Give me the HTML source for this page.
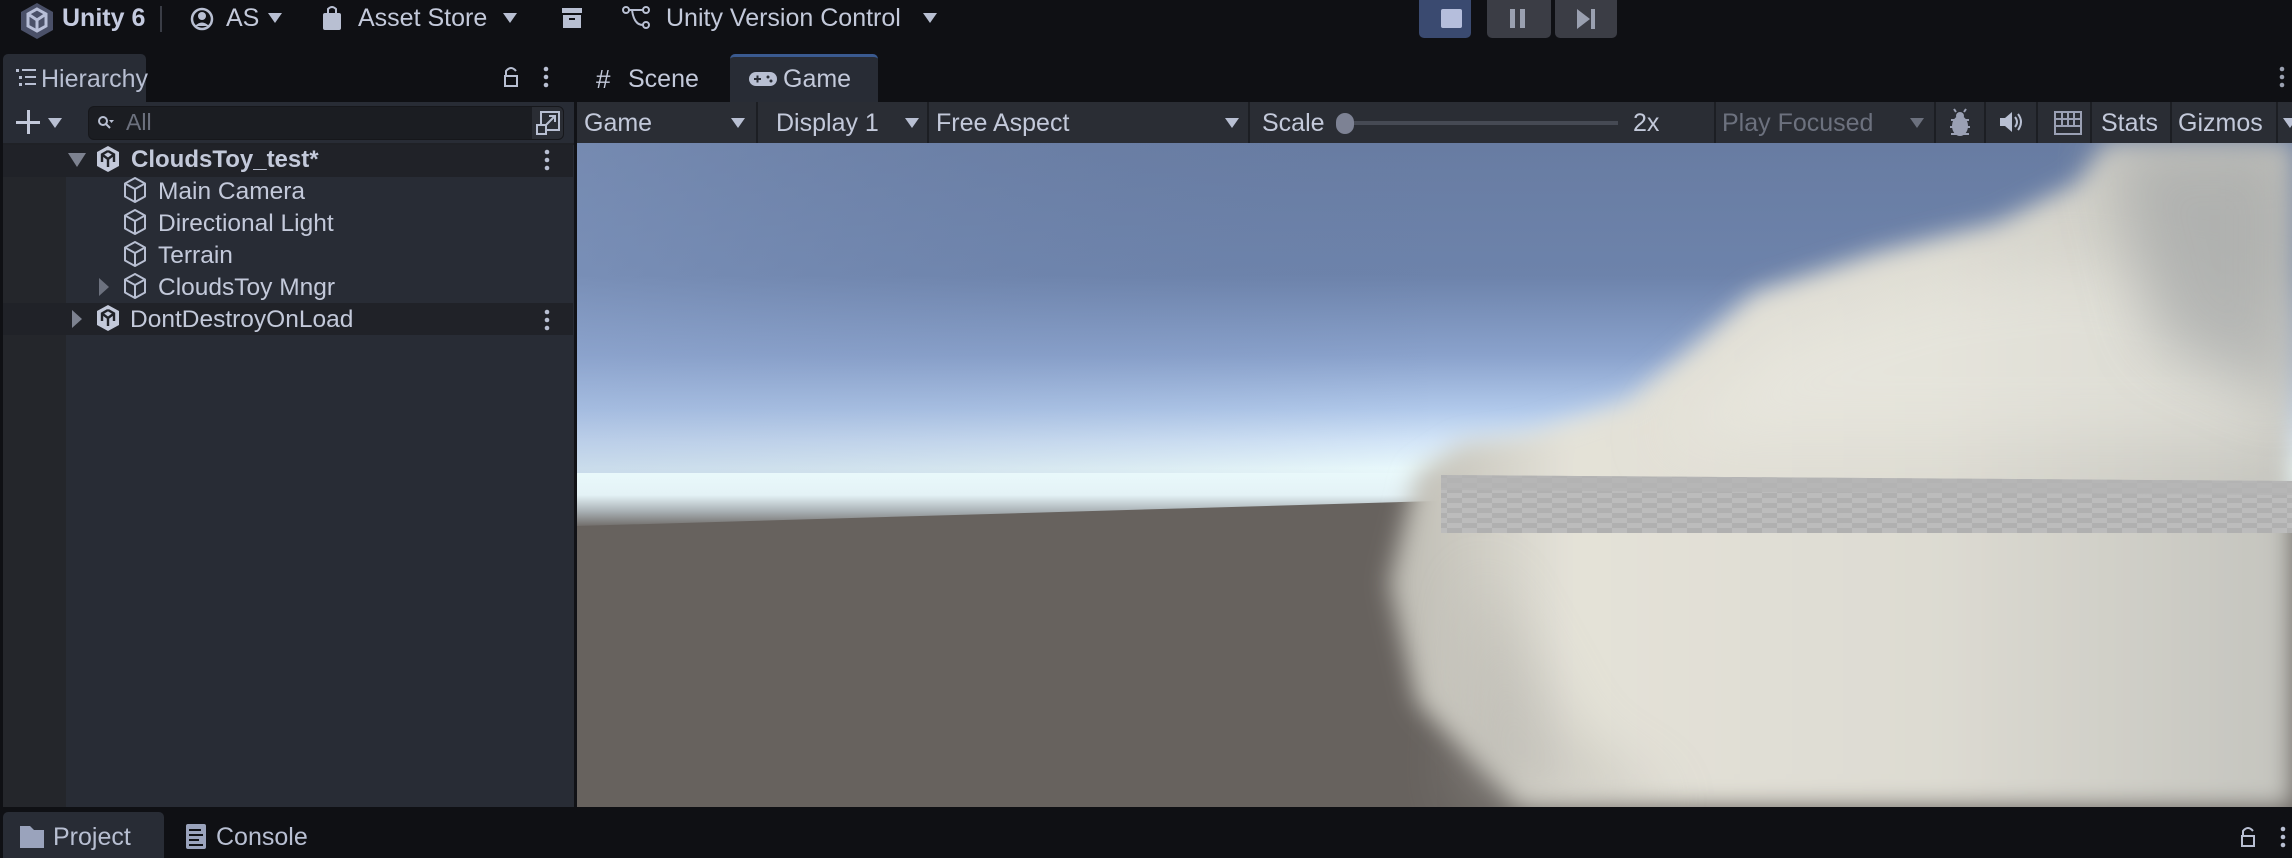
<!DOCTYPE html>
<html><head><meta charset="utf-8"><style>
*{margin:0;padding:0;box-sizing:border-box}
body{width:2292px;height:858px;overflow:hidden;background:#0f1014;font-family:"Liberation Sans",sans-serif;color:#c3c9da;position:relative}
.a{position:absolute;white-space:nowrap}
.t{font-size:25px;line-height:1}
.tri{position:absolute;width:0;height:0;border-left:7px solid transparent;border-right:7px solid transparent;border-top:10px solid #b8bfd2}
.sep{position:absolute;width:2px;background:#1c1e23}
.row{position:absolute;left:3px;width:570px;height:32px}
</style></head><body>

<!-- top bar -->
<svg class="a" style="left:20px;top:2px" width="34" height="38" viewBox="0 0 34 38"><polygon points="17,1 33,10 33,28 17,37 1,28 1,10" fill="#4a5068"/><path d="M17 7 L26 12 L26 24 L17 29 L8 24 L8 12Z" fill="none" stroke="#b8bfd8" stroke-width="3"/><path d="M17 18 V29 M17 18 L8 12 M17 18 L26 12" stroke="#b8bfd8" stroke-width="3"/></svg>
<div class="a t" style="left:62px;top:6px;font-weight:bold;color:#c4cadf">Unity 6</div>
<div class="sep" style="left:160px;top:6px;height:26px;background:#3a3d46"></div>
<svg class="a" style="left:190px;top:6px" width="24" height="26" viewBox="0 0 24 26"><circle cx="12" cy="13" r="10" fill="none" stroke="#b8bfd2" stroke-width="2.5"/><circle cx="12" cy="10" r="4" fill="#b8bfd2"/><path d="M5 20 Q12 13 19 20" fill="#b8bfd2"/></svg>
<div class="a t" style="left:226px;top:6px">AS</div><div class="tri" style="left:268px;top:13px"></div>
<svg class="a" style="left:322px;top:5px" width="20" height="26" viewBox="0 0 20 26"><path d="M6 8 V4 Q10 0 14 4 V8" fill="none" stroke="#b8bfd2" stroke-width="2"/><rect x="1" y="8" width="18" height="17" rx="2" fill="#b8bfd2"/></svg>
<div class="a t" style="left:358px;top:6px">Asset Store</div><div class="tri" style="left:503px;top:13px"></div>
<svg class="a" style="left:561px;top:7px" width="22" height="22" viewBox="0 0 22 22"><rect x="1" y="1" width="20" height="5" fill="#b8bfd2"/><rect x="2" y="8" width="18" height="13" fill="#b8bfd2"/><rect x="8" y="11" width="6" height="2" fill="#0f1014"/></svg>
<svg class="a" style="left:622px;top:5px" width="30" height="26" viewBox="0 0 30 26"><circle cx="4" cy="5" r="3" fill="none" stroke="#b8bfd2" stroke-width="2"/><circle cx="24" cy="5" r="3" fill="none" stroke="#b8bfd2" stroke-width="2"/><circle cx="24" cy="20" r="3" fill="none" stroke="#b8bfd2" stroke-width="2"/><path d="M7 5 H21 M10 5 Q12 20 21 20" fill="none" stroke="#b8bfd2" stroke-width="2"/></svg>
<div class="a t" style="left:666px;top:6px">Unity Version Control</div><div class="tri" style="left:923px;top:13px"></div>

<div class="a" style="left:1419px;top:0;width:52px;height:38px;background:#3a4a70;border-radius:0 0 5px 5px"></div>
<div class="a" style="left:1441px;top:9px;width:21px;height:19px;background:#b5bedc;border-radius:2px"></div>
<div class="a" style="left:1487px;top:0;width:64px;height:38px;background:#3b3d45;border-radius:0 0 5px 5px"></div>
<div class="a" style="left:1510px;top:9px;width:5px;height:19px;background:#9aa0b0"></div><div class="a" style="left:1520px;top:9px;width:5px;height:19px;background:#9aa0b0"></div>
<div class="a" style="left:1555px;top:0;width:62px;height:38px;background:#3b3d45;border-radius:0 0 5px 5px"></div>
<svg class="a" style="left:1577px;top:9px" width="20" height="20"><polygon points="0,0 13,10 0,20" fill="#9aa0b0"/><rect x="14" y="0" width="4" height="20" fill="#9aa0b0"/></svg>

<!-- tab row -->
<div class="a" style="left:3px;top:54px;width:143px;height:48px;background:#282c35;border-radius:5px 5px 0 0"></div>
<svg class="a" style="left:16px;top:69px" width="20" height="18"><g fill="#b8bfd2"><rect x="0" y="0" width="3" height="3"/><rect x="6" y="0" width="14" height="2"/><rect x="3" y="7" width="3" height="3"/><rect x="9" y="7" width="11" height="2"/><rect x="3" y="14" width="3" height="3"/><rect x="9" y="14" width="11" height="2"/></g></svg>
<div class="a t" style="left:41px;top:67px;color:#b8bfd2">Hierarchy</div>
<svg class="a" style="left:503px;top:66px" width="16" height="22"><path d="M3 9 V5 Q8 -1 13 5" fill="none" stroke="#b8bfd2" stroke-width="2"/><rect x="2" y="10" width="12" height="10" fill="none" stroke="#b8bfd2" stroke-width="2"/></svg>
<svg class="a" style="left:543px;top:66px" width="6" height="22"><circle cx="3" cy="3" r="2.3" fill="#b8bfd2"/><circle cx="3" cy="11" r="2.3" fill="#b8bfd2"/><circle cx="3" cy="19" r="2.3" fill="#b8bfd2"/></svg>
<div class="a t" style="left:596px;top:66px;font-size:26px">#</div>
<div class="a t" style="left:628px;top:67px">Scene</div>
<div class="a" style="left:730px;top:54px;width:148px;height:48px;background:#282c35;border-top:3px solid #3a5a90;border-radius:5px 5px 0 0"></div>
<svg class="a" style="left:749px;top:70px" width="28" height="18"><rect x="0" y="2" width="28" height="14" rx="7" fill="#b8bfd2"/><rect x="5" y="8" width="7" height="2" fill="#282c35"/><rect x="7.5" y="5.5" width="2" height="7" fill="#282c35"/><circle cx="19" cy="7" r="1.5" fill="#282c35"/><circle cx="22" cy="11" r="1.5" fill="#282c35"/></svg>
<div class="a t" style="left:783px;top:67px">Game</div>
<svg class="a" style="left:2279px;top:66px" width="6" height="22"><circle cx="3" cy="3" r="2.3" fill="#9aa0b0"/><circle cx="3" cy="11" r="2.3" fill="#9aa0b0"/><circle cx="3" cy="19" r="2.3" fill="#9aa0b0"/></svg>

<!-- hierarchy panel -->
<div class="a" style="left:3px;top:102px;width:571px;height:705px;background:#282c35"></div>
<div class="a" style="left:3px;top:145px;width:63px;height:662px;background:#24262b"></div>
<div class="a" style="left:3px;top:143px;width:571px;height:2px;background:#1f2126"></div>
<div class="a" style="left:574px;top:102px;width:3px;height:705px;background:#111216"></div>
<div class="a" style="left:16px;top:121px;width:24px;height:3px;background:#c3c9da"></div>
<div class="a" style="left:26.5px;top:110px;width:3px;height:24px;background:#c3c9da"></div>
<div class="tri" style="left:48px;top:118px;border-top-color:#b8bfd2"></div>
<div class="a" style="left:88px;top:106px;width:476px;height:34px;background:#1b1d22;border:1px solid #16171b;border-radius:6px"></div>
<svg class="a" style="left:97px;top:115px" width="18" height="16"><circle cx="6" cy="6" r="4" fill="none" stroke="#b8bfd2" stroke-width="2"/><path d="M9 9 L13 13" stroke="#b8bfd2" stroke-width="2"/><path d="M12 5 L17 5 L14.5 8Z" fill="#b8bfd2"/></svg>
<div class="a t" style="left:126px;top:111px;color:#6c717e;font-size:23px">All</div>
<div class="a" style="left:532px;top:107px;width:31px;height:32px;background:#2a2d34;border-radius:0 5px 5px 0"></div>
<svg class="a" style="left:536px;top:111px" width="24" height="24"><rect x="5" y="1" width="18" height="18" fill="none" stroke="#b8bfd2" stroke-width="2"/><rect x="1" y="14" width="9" height="9" fill="#2a2d34" stroke="#b8bfd2" stroke-width="2"/><path d="M10 14 L19 5 M13 5 H19 V11" fill="none" stroke="#b8bfd2" stroke-width="2"/></svg>

<div class="row" style="top:145px;background:#202228"></div>
<div class="row" style="top:303px;background:#202228"></div>
<svg width="0" height="0" style="position:absolute"><defs>
<symbol id="cube" viewBox="0 0 24 28"><path d="M12 2 L22 7.5 V20.5 L12 26 L2 20.5 V7.5Z M2 7.5 L12 13 L22 7.5 M12 13 V26" fill="none" stroke="#b8bfd2" stroke-width="2" stroke-linejoin="round"/></symbol>
<symbol id="ucube" viewBox="0 0 24 28"><path d="M12 1 L23 7 V21 L12 27 L1 21 V7Z" fill="#c3c9da"/><path d="M12 6 L18 9.5 V17 M12 6 L6 9.5 V17 M12 14 L6 9.5 M12 14 L18 9.5 M12 14 V22" fill="none" stroke="#202228" stroke-width="2.4"/></symbol>
</defs></svg>
<svg class="a" style="left:68px;top:153px" width="18" height="14"><polygon points="0,0 18,0 9,14" fill="#7d8290"/></svg>
<svg class="a" style="left:96px;top:145px" width="24" height="28"><use href="#ucube"/></svg>
<div class="a t" style="left:131px;top:148px;font-weight:bold;font-size:24px">CloudsToy_test*</div>
<svg class="a" style="left:544px;top:149px" width="6" height="22"><circle cx="3" cy="3" r="2.3" fill="#b8bfd2"/><circle cx="3" cy="11" r="2.3" fill="#b8bfd2"/><circle cx="3" cy="19" r="2.3" fill="#b8bfd2"/></svg>

<svg class="a" style="left:123px;top:176px" width="24" height="28"><use href="#cube"/></svg>
<div class="a t" style="left:158px;top:180px;font-size:24.5px">Main Camera</div>
<svg class="a" style="left:123px;top:208px" width="24" height="28"><use href="#cube"/></svg>
<div class="a t" style="left:158px;top:212px;font-size:24.5px">Directional Light</div>
<svg class="a" style="left:123px;top:240px" width="24" height="28"><use href="#cube"/></svg>
<div class="a t" style="left:158px;top:244px;font-size:24.5px">Terrain</div>
<svg class="a" style="left:99px;top:278px" width="10" height="18"><polygon points="0,0 10,9 0,18" fill="#6c717e"/></svg>
<svg class="a" style="left:123px;top:272px" width="24" height="28"><use href="#cube"/></svg>
<div class="a t" style="left:158px;top:276px;font-size:24.5px">CloudsToy Mngr</div>
<svg class="a" style="left:72px;top:310px" width="10" height="18"><polygon points="0,0 10,9 0,18" fill="#7d8290"/></svg>
<svg class="a" style="left:96px;top:304px" width="24" height="28"><use href="#ucube"/></svg>
<div class="a t" style="left:130px;top:308px;font-size:24.5px">DontDestroyOnLoad</div>
<svg class="a" style="left:544px;top:309px" width="6" height="22"><circle cx="3" cy="3" r="2.3" fill="#b8bfd2"/><circle cx="3" cy="11" r="2.3" fill="#b8bfd2"/><circle cx="3" cy="19" r="2.3" fill="#b8bfd2"/></svg>

<!-- game toolbar -->
<div class="a" style="left:577px;top:102px;width:1715px;height:41px;background:#2a2d34"></div>
<div class="a t" style="left:584px;top:111px">Game</div><div class="tri" style="left:731px;top:118px"></div>
<div class="sep" style="left:756px;top:102px;height:41px"></div>
<div class="a t" style="left:776px;top:111px">Display 1</div><div class="tri" style="left:905px;top:118px"></div>
<div class="sep" style="left:927px;top:102px;height:41px"></div>
<div class="a t" style="left:936px;top:111px">Free Aspect</div><div class="tri" style="left:1225px;top:118px"></div>
<div class="sep" style="left:1248px;top:102px;height:41px"></div>
<div class="a t" style="left:1262px;top:111px">Scale</div>
<div class="a" style="left:1346px;top:121px;width:272px;height:4px;background:#464a54"></div>
<div class="a" style="left:1336px;top:113px;width:18px;height:21px;border-radius:9px;background:#7d8294"></div>
<div class="a t" style="left:1633px;top:111px">2x</div>
<div class="sep" style="left:1714px;top:102px;height:41px"></div>
<div class="a t" style="left:1722px;top:111px;color:#6c717e">Play Focused</div><div class="tri" style="left:1910px;top:118px;border-top-color:#6c717e"></div>
<div class="sep" style="left:1934px;top:102px;height:41px"></div>
<svg class="a" style="left:1945px;top:108px" width="30" height="30"><ellipse cx="15" cy="18" rx="8" ry="10" fill="#9aa0b4"/><circle cx="15" cy="8" r="4" fill="#9aa0b4"/><path d="M6 12 H24 M5 19 H25 M6 26 H24 M11 4 L9 1 M19 4 L21 1" stroke="#9aa0b4" stroke-width="2"/></svg>
<div class="sep" style="left:1984px;top:102px;height:41px"></div>
<svg class="a" style="left:2000px;top:110px" width="26" height="24"><polygon points="0,8 5,8 12,2 12,22 5,16 0,16" fill="#b8bfd2"/><path d="M15 7 Q19 12 15 17 M18 4 Q24 12 18 20" fill="none" stroke="#b8bfd2" stroke-width="2"/></svg>
<div class="sep" style="left:2036px;top:102px;height:41px"></div>
<svg class="a" style="left:2054px;top:111px" width="28" height="24"><rect x="1" y="1" width="26" height="22" fill="none" stroke="#9aa0b4" stroke-width="2"/><path d="M1 8 H27 M1 15 H27 M8 1 V15 M14 1 V15 M20 1 V15" stroke="#9aa0b4" stroke-width="2"/></svg>
<div class="sep" style="left:2090px;top:102px;height:41px"></div>
<div class="a t" style="left:2101px;top:111px">Stats</div>
<div class="sep" style="left:2170px;top:102px;height:41px"></div>
<div class="a t" style="left:2178px;top:111px">Gizmos</div>
<div class="sep" style="left:2276px;top:102px;height:41px"></div>
<div class="tri" style="left:2283px;top:118px"></div>

<!-- game view -->
<svg class="a" style="left:577px;top:143px" width="1715" height="664" viewBox="0 0 1715 664">
<defs>
<linearGradient id="sky" x1="0" y1="0" x2="0" y2="1">
<stop offset="0" stop-color="#687ca2"/><stop offset="0.2" stop-color="#6d83ab"/><stop offset="0.32" stop-color="#8aa2cc"/><stop offset="0.4" stop-color="#b0c8ea"/><stop offset="0.45" stop-color="#d4e6f8"/><stop offset="0.49" stop-color="#eafafc"/><stop offset="0.53" stop-color="#e4f2f6"/><stop offset="0.555" stop-color="#a8b0b4"/><stop offset="0.58" stop-color="#6a6561"/><stop offset="1" stop-color="#66615d"/></linearGradient>
<linearGradient id="skyx" x1="0" y1="0" x2="1" y2="0"><stop offset="0" stop-color="#8ea4cc" stop-opacity="0.35"/><stop offset="0.5" stop-color="#6478a0" stop-opacity="0"/></linearGradient>
<pattern id="chk" width="30" height="10" patternUnits="userSpaceOnUse"><rect width="30" height="10" fill="#b0b0b0"/><rect width="15" height="5" fill="#bcbcbc"/><rect x="15" y="5" width="15" height="5" fill="#bcbcbc"/></pattern>
<filter id="b" x="-20%" y="-20%" width="140%" height="140%"><feGaussianBlur stdDeviation="12"/></filter>
<filter id="b2" x="-30%" y="-30%" width="160%" height="160%"><feGaussianBlur stdDeviation="30"/></filter>
<linearGradient id="cl" x1="0" y1="0" x2="1" y2="0"><stop offset="0" stop-color="#bcbab2"/><stop offset="0.2" stop-color="#e4e2d8"/><stop offset="0.6" stop-color="#dddbd2"/><stop offset="1" stop-color="#c4c4be"/></linearGradient>
</defs>
<rect width="1715" height="664" fill="url(#sky)"/>
<rect width="1715" height="330" fill="url(#skyx)"/>
<polygon points="0,383 860,358 860,664 0,664" fill="#67625e"/>
<path d="M943,664 L840,560 L812,440 L840,330 L885,300 L950,292 L1050,258 L1120,200 L1177,150 L1300,110 L1420,80 L1500,40 L1530,0 L1715,0 L1715,664Z" fill="url(#cl)" filter="url(#b)"/>
<path d="M1080,300 L1200,190 L1350,140 L1500,120 L1715,160 L1715,300Z" fill="#eeede4" opacity="0.5" filter="url(#b2)"/>
<path d="M1530,0 L1715,0 L1715,260 L1580,200Z" fill="#a6a8a8" opacity="0.7" filter="url(#b2)"/>
<path d="M900,420 L1000,600 L1100,664 L880,664Z" fill="#a8a6a0" opacity="0.4" filter="url(#b2)"/>
<polygon points="864,332 1715,338 1715,390 864,390" fill="url(#chk)"/>
<polygon points="864,332 1715,338 1715,352 864,347" fill="#b4b4b4" opacity="0.8"/>
</svg>

<!-- bottom bar -->
<div class="a" style="left:3px;top:812px;width:161px;height:46px;background:#282c35;border-radius:5px 5px 0 0"></div>
<svg class="a" style="left:20px;top:826px" width="24" height="22"><path d="M0 0 H10 L14 4 H24 V22 H0Z" fill="#9aa3bc"/></svg>
<div class="a t" style="left:53px;top:825px;color:#b8bfd2">Project</div>
<svg class="a" style="left:186px;top:824px" width="20" height="25"><rect width="20" height="25" rx="2" fill="#9aa3bc"/><g fill="#0f1014"><rect x="3" y="5" width="12" height="2"/><rect x="3" y="10" width="14" height="2"/><rect x="3" y="15" width="10" height="2"/><rect x="3" y="20" width="14" height="2"/></g></svg>
<div class="a t" style="left:216px;top:825px;color:#b8bfd2">Console</div>
<svg class="a" style="left:2240px;top:826px" width="16" height="22"><path d="M3 9 V5 Q8 -1 13 5" fill="none" stroke="#b8bfd2" stroke-width="2"/><rect x="2" y="10" width="12" height="10" fill="none" stroke="#b8bfd2" stroke-width="2"/></svg>
<svg class="a" style="left:2280px;top:826px" width="6" height="22"><circle cx="3" cy="3" r="2.3" fill="#b8bfd2"/><circle cx="3" cy="11" r="2.3" fill="#b8bfd2"/><circle cx="3" cy="19" r="2.3" fill="#b8bfd2"/></svg>
</body></html>
